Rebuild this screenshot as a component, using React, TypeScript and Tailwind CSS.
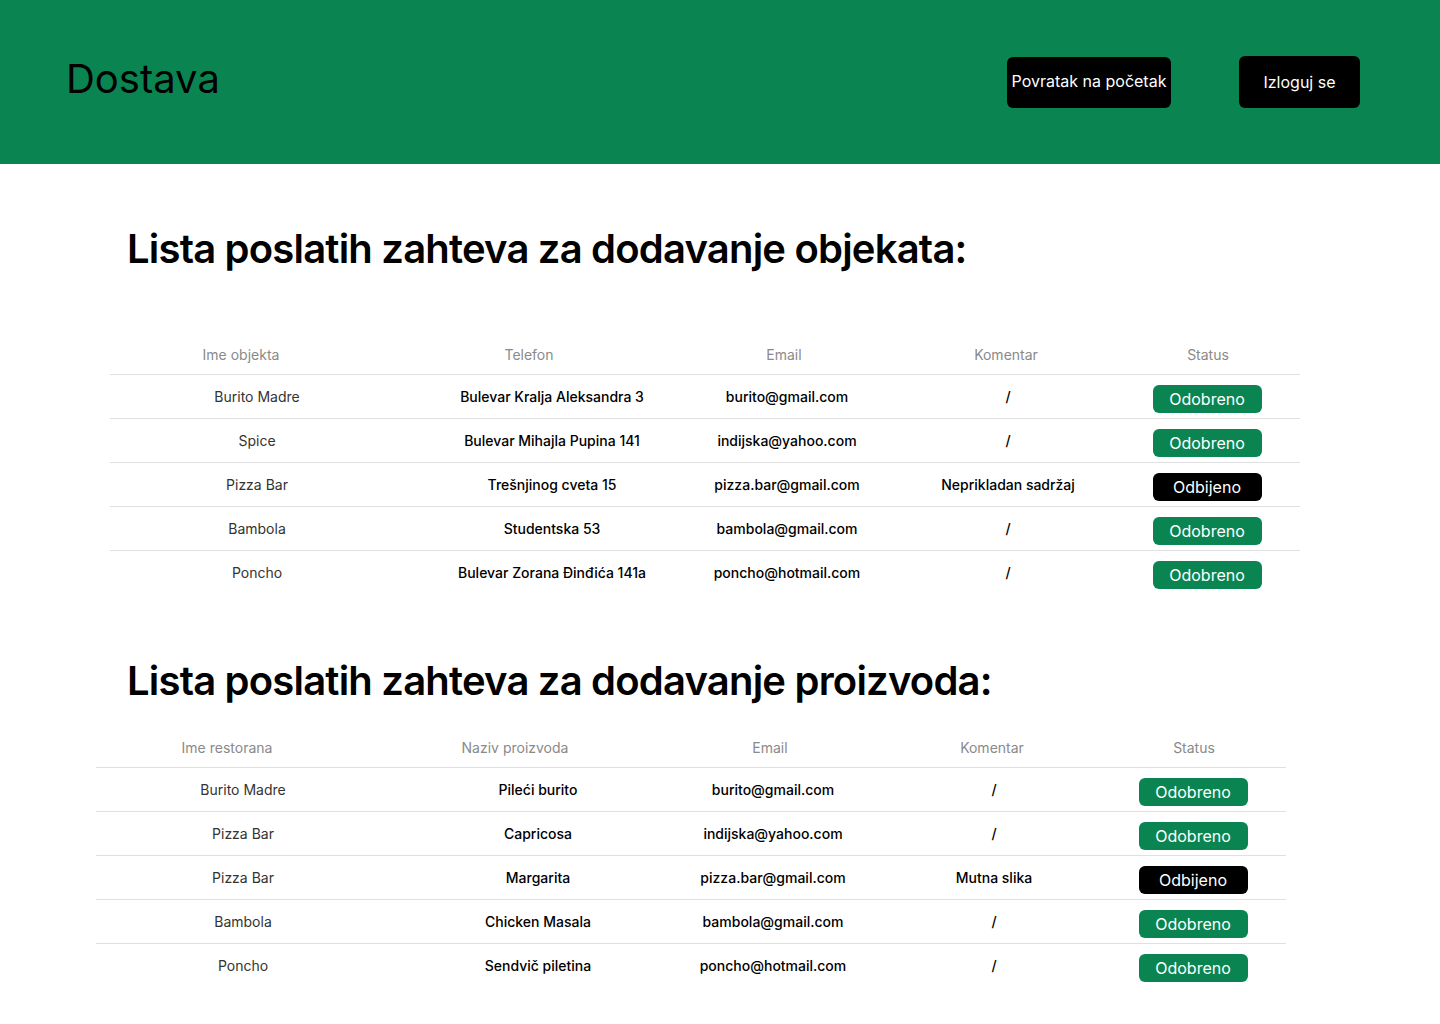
const objekti = [
  { ime: "Burito Madre", b: "Bulevar Kralja Aleksandra 3", email: "burito@gmail.com", kom: "/", ok: true },
  { ime: "Spice", b: "Bulevar Mihajla Pupina 141", email: "indijska@yahoo.com", kom: "/", ok: true },
  { ime: "Pizza Bar", b: "Trešnjinog cveta 15", email: "pizza.bar@gmail.com", kom: "Neprikladan sadržaj", ok: false },
  { ime: "Bambola", b: "Studentska 53", email: "bambola@gmail.com", kom: "/", ok: true },
  { ime: "Poncho", b: "Bulevar Zorana Đinđića 141a", email: "poncho@hotmail.com", kom: "/", ok: true },
];

const proizvodi = [
  { ime: "Burito Madre", b: "Pileći burito", email: "burito@gmail.com", kom: "/", ok: true },
  { ime: "Pizza Bar", b: "Capricosa", email: "indijska@yahoo.com", kom: "/", ok: true },
  { ime: "Pizza Bar", b: "Margarita", email: "pizza.bar@gmail.com", kom: "Mutna slika", ok: false },
  { ime: "Bambola", b: "Chicken Masala", email: "bambola@gmail.com", kom: "/", ok: true },
  { ime: "Poncho", b: "Sendvič piletina", email: "poncho@hotmail.com", kom: "/", ok: true },
];

type Row = { ime: string; b: string; email: string; kom: string; ok: boolean };

function Status({ ok }: { ok: boolean }) {
  return (
    <span
      className={
        "flex h-7 w-[109px] items-center justify-center rounded-md text-base text-white " +
        (ok ? "bg-[#0a8552]" : "bg-black")
      }
    >
      {ok ? "Odobreno" : "Odbijeno"}
    </span>
  );
}

function Tabela({ cols, rows, className }: { cols: string[]; rows: Row[]; className: string }) {
  return (
    <div className={"w-[1190px] " + className}>
      <div className="grid h-10 grid-cols-[262px_314px_196px_248px_156px] items-center border-b border-[#e0e0e0] text-center text-sm text-[#8a8a8a]">
        {cols.map((c) => (
          <span key={c}>{c}</span>
        ))}
      </div>
      {rows.map((r, i) => (
        <div
          key={i}
          className={
            "grid h-11 grid-cols-[294px_296px_174px_268px_130px] items-center text-center text-sm " +
            (i < rows.length - 1 ? "border-b border-[#e0e0e0]" : "")
          }
        >
          <span className="text-[#333]">{r.ime}</span>
          <span className="font-medium text-black">{r.b}</span>
          <span className="font-medium text-black">{r.email}</span>
          <span className="font-medium text-black">{r.kom}</span>
          <span className="flex justify-center pt-1">
            <Status ok={r.ok} />
          </span>
        </div>
      ))}
    </div>
  );
}

export default function App() {
  return (
    <div className="min-h-screen bg-white font-['Inter',sans-serif] text-black">
      <header className="flex h-[164px] items-center bg-[#0a8552] pl-[66px] pr-[80px]">
        <h1 className="mb-[6px] text-[40px] leading-[48px] font-normal">Dostava</h1>
        <div className="ml-auto flex items-center gap-[68px]">
          <button className="h-[51px] w-[164px] rounded-md bg-black pb-[2px] text-base text-white">
            Povratak na početak
          </button>
          <button className="h-[52px] w-[121px] rounded-md bg-black text-base text-white">
            Izloguj se
          </button>
        </div>
      </header>

      <main className="pb-10">
        <h2 className="ml-[127px] mt-[61px] text-[40px] leading-[48px] font-semibold tracking-[-0.8px]">
          Lista poslatih zahteva za dodavanje objekata:
        </h2>
        <Tabela
          className="ml-[110px] mt-[62px]"
          cols={["Ime objekta", "Telefon", "Email", "Komentar", "Status"]}
          rows={objekti}
        />

        <h2 className="ml-[127px] mt-[62px] text-[40px] leading-[48px] font-semibold tracking-[-0.8px]">
          Lista poslatih zahteva za dodavanje proizvoda:
        </h2>
        <Tabela
          className="ml-[96px] mt-[23px]"
          cols={["Ime restorana", "Naziv proizvoda", "Email", "Komentar", "Status"]}
          rows={proizvodi}
        />
      </main>
    </div>
  );
}
